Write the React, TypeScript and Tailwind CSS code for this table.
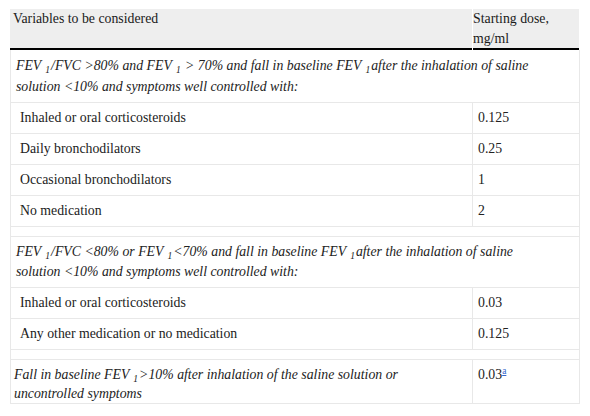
function Sub({ children }: { children: React.ReactNode }) {
  return (
    <sub className="relative top-[3px] ml-[4px] mr-[1px] align-baseline text-[9.5px] leading-none">
      {children}
    </sub>
  );
}

type Row = { label: string; dose: string };

const group1: Row[] = [
  { label: "Inhaled or oral corticosteroids", dose: "0.125" },
  { label: "Daily bronchodilators", dose: "0.25" },
  { label: "Occasional bronchodilators", dose: "1" },
  { label: "No medication", dose: "2" },
];

const group2: Row[] = [
  { label: "Inhaled or oral corticosteroids", dose: "0.03" },
  { label: "Any other medication or no medication", dose: "0.125" },
];

function DoseRow({ row }: { row: Row }) {
  return (
    <div className="flex border-b border-[#e8e8e8]">
      <div className="w-[462px] shrink-0 border-r border-[#e8e8e8] py-[5px] pl-[9px]">
        {row.label}
      </div>
      <div className="flex-1 py-[5px] pl-[5px]">{row.dose}</div>
    </div>
  );
}

function Spacer() {
  return <div className="h-[10px] border-b border-[#e8e8e8]" />;
}

export default function App() {
  return (
    <div className="min-h-[416px] w-[590px] bg-white pl-[10px] pt-[9px] font-['Liberation_Serif','Times_New_Roman',serif] text-[13.8px] leading-[20px] text-[#222]">
      <div className="w-[570px]">
        {/* header */}
        <div className="flex gap-[1px] leading-[19.5px] text-[#1a1a1a]">
          <div className="w-[462px] shrink-0 border-b-2 border-black bg-[#eeeeee] pl-[3px]">
            Variables to be considered
          </div>
          <div className="w-[106px] border-b-2 border-black bg-[#eeeeee]">
            Starting dose,
            <br />
            mg/ml
          </div>
        </div>

        <div className="border-x border-[#e8e8e8]">
          <div className="border-b border-[#e8e8e8] py-[5px] pl-[5px] pr-[4px] italic leading-[21px]">
            FEV<Sub>1</Sub>/FVC &gt;80% and FEV<Sub>1</Sub> &gt; 70% and fall in
            baseline FEV<Sub>1</Sub>after the inhalation of saline solution
            &lt;10% and symptoms well controlled with:
          </div>
          {group1.map((r) => (
            <DoseRow key={r.label} row={r} />
          ))}
          <Spacer />
          <div className="border-b border-[#e8e8e8] py-[5px] pl-[5px] pr-[50px] italic">
            FEV<Sub>1</Sub>/FVC &lt;80% or FEV<Sub>1</Sub>&lt;70% and fall in
            baseline FEV<Sub>1</Sub>after the inhalation of saline solution
            &lt;10% and symptoms well controlled with:
          </div>
          {group2.map((r) => (
            <DoseRow key={r.label} row={r} />
          ))}
          <Spacer />
          <div className="flex border-b border-[#e8e8e8] leading-[19px]">
            <div className="w-[462px] shrink-0 border-r border-[#e8e8e8] pt-[5px] pl-[3px] pr-[6px] italic">
              Fall in baseline FEV<Sub>1</Sub>&gt;10% after inhalation of the
              saline solution or uncontrolled symptoms
            </div>
            <div className="flex-1 pt-[5px] pl-[5px]">
              0.03
              <sup className="relative -top-[5px] align-baseline text-[9.5px] leading-none">
                <a href="#" className="text-[#3366cc] underline">
                  a
                </a>
              </sup>
            </div>
          </div>
        </div>
      </div>
    </div>
  );
}
